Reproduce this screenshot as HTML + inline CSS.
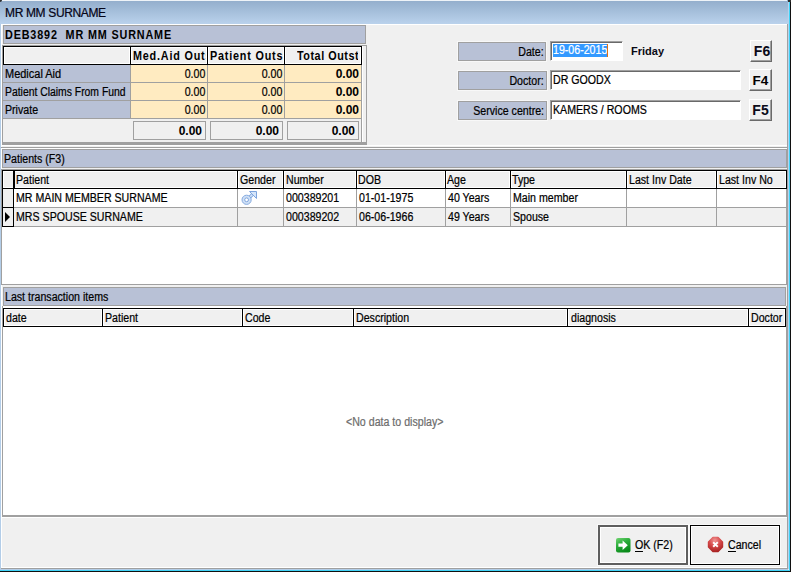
<!DOCTYPE html>
<html><head><meta charset="utf-8">
<style>
*{box-sizing:border-box;margin:0;padding:0}
html,body{width:791px;height:572px;overflow:hidden;background:#F0F0F0}
body{position:relative;font-family:"Liberation Sans",sans-serif;font-size:12px;color:#000}
.a{position:absolute}
.t{position:absolute;white-space:pre;line-height:14px;font-size:12px;letter-spacing:0;transform:scaleX(0.885);transform-origin:0 0;-webkit-text-stroke:0.22px currentColor}
.tr{transform-origin:100% 0}
.b{font-weight:bold;letter-spacing:0;transform:none;-webkit-text-stroke:0}
.bx{transform:scaleX(0.9);letter-spacing:0.9px}
u{text-decoration:none;border-bottom:1px solid #000;display:inline-block;line-height:11px}
</style></head><body>
<div class="a" style="left:0px;top:0px;width:791px;height:24px;background:linear-gradient(#92ADCB,#BAD2EC)"></div>
<div class="a" style="left:2px;top:0px;width:785px;height:1px;background:#EEF3F8"></div>
<div class="a" style="left:0px;top:0px;width:2px;height:2px;background:#303030;border-radius:0 0 2px 0"></div>
<div class="a" style="left:788px;top:0px;width:3px;height:2px;background:#303030"></div>
<div class="t" style="left:5px;top:6px;letter-spacing:-0.35px;color:#050518;transform:none">MR MM SURNAME</div>
<div class="a" style="left:0px;top:24px;width:1px;height:545px;background:#B3CDE8"></div>
<div class="a" style="left:788px;top:2px;width:1px;height:567px;background:#B5D3EE"></div>
<div class="a" style="left:789px;top:2px;width:1px;height:569px;background:#3FD2F6"></div>
<div class="a" style="left:790px;top:2px;width:1px;height:570px;background:#101010"></div>
<div class="a" style="left:0px;top:569px;width:788px;height:1px;background:#B3CDE8"></div>
<div class="a" style="left:0px;top:570px;width:789px;height:1px;background:#3FD2F6"></div>
<div class="a" style="left:0px;top:571px;width:791px;height:1px;background:#101010"></div>
<div class="a" style="left:1px;top:24px;width:787px;height:1px;background:#FFFFFF"></div>
<div class="a" style="left:1px;top:24px;width:1px;height:544px;background:#FFFFFF"></div>
<div class="a" style="left:787px;top:24px;width:1px;height:545px;background:#A0A0A0"></div>
<div class="a" style="left:1px;top:568px;width:787px;height:1px;background:#A0A0A0"></div>
<div class="a" style="left:2px;top:567px;width:785px;height:1px;background:#FFFFFF"></div>
<div class="a" style="left:3px;top:25px;width:363px;height:19px;background:#B8C1D6;border:1px solid #A0A0A0"></div>
<div class="t b bx" style="left:5px;top:28px;letter-spacing:0.95px">DEB3892  MR MM SURNAME</div>
<div class="a" style="left:2px;top:45px;width:365px;height:100px;background:#F0F0F0;border:1px solid #A0A0A0;border-bottom:3px solid #A0A0A0"></div>
<div class="a" style="left:362px;top:46px;width:1px;height:96px;background:#FFFFFF"></div>
<div class="a" style="left:3px;top:46px;width:359px;height:19px;background:#F0F0F0;border:1px solid #000;box-shadow:inset 1px 1px 0 #fff,inset -1px -1px 0 #fff"></div>
<div class="a" style="left:129px;top:47px;width:1px;height:17px;background:#FFFFFF"></div>
<div class="a" style="left:131px;top:47px;width:1px;height:17px;background:#FFFFFF"></div>
<div class="a" style="left:130px;top:46px;width:1px;height:19px;background:#000"></div>
<div class="a" style="left:206px;top:47px;width:1px;height:17px;background:#FFFFFF"></div>
<div class="a" style="left:208px;top:47px;width:1px;height:17px;background:#FFFFFF"></div>
<div class="a" style="left:207px;top:46px;width:1px;height:19px;background:#000"></div>
<div class="a" style="left:283px;top:47px;width:1px;height:17px;background:#FFFFFF"></div>
<div class="a" style="left:285px;top:47px;width:1px;height:17px;background:#FFFFFF"></div>
<div class="a" style="left:284px;top:46px;width:1px;height:19px;background:#000"></div>
<div class="a" style="left:131px;top:47px;width:75px;height:16px;overflow:hidden"><div class="t b bx" style="left:2px;top:2px">Med.Aid Outstanding</div></div>
<div class="a" style="left:208px;top:47px;width:75px;height:16px;overflow:hidden"><div class="t b bx" style="left:2px;top:2px">Patient Outstanding</div></div>
<div class="a" style="left:285px;top:47px;width:73px;height:17px;overflow:hidden"><div class="t b bx" style="left:12px;top:2px;letter-spacing:0.6px">Total Outstanding</div></div>
<div class="a" style="left:3px;top:65px;width:127px;height:53px;background:#B8C1D6"></div>
<div class="a" style="left:131px;top:65px;width:231px;height:53px;background:#FFEBC1"></div>
<div class="a" style="left:3px;top:82px;width:359px;height:1px;background:#A0A0A0"></div>
<div class="a" style="left:3px;top:100px;width:359px;height:1px;background:#A0A0A0"></div>
<div class="a" style="left:3px;top:118px;width:359px;height:1px;background:#A0A0A0"></div>
<div class="a" style="left:130px;top:65px;width:1px;height:54px;background:#A0A0A0"></div>
<div class="a" style="left:207px;top:65px;width:1px;height:54px;background:#A0A0A0"></div>
<div class="a" style="left:284px;top:65px;width:1px;height:54px;background:#A0A0A0"></div>
<div class="a" style="left:361px;top:65px;width:1px;height:77px;background:#A0A0A0"></div>
<div class="t" style="left:5px;top:67px;transform:scaleX(0.915)">Medical Aid</div>
<div class="t tr" style="right:586px;top:67px;text-align:right;">0.00</div>
<div class="t tr" style="right:509px;top:67px;text-align:right;">0.00</div>
<div class="t b" style="right:432px;top:67px;text-align:right">0.00</div>
<div class="t" style="left:5px;top:85px;transform:scaleX(0.865)">Patient Claims From Fund</div>
<div class="t tr" style="right:586px;top:85px;text-align:right;">0.00</div>
<div class="t tr" style="right:509px;top:85px;text-align:right;">0.00</div>
<div class="t b" style="right:432px;top:85px;text-align:right">0.00</div>
<div class="t" style="left:5px;top:103px;">Private</div>
<div class="t tr" style="right:586px;top:103px;text-align:right;">0.00</div>
<div class="t tr" style="right:509px;top:103px;text-align:right;">0.00</div>
<div class="t b" style="right:432px;top:103px;text-align:right">0.00</div>
<div class="a" style="left:133px;top:121px;width:73px;height:19px;border:1px solid #A0A0A0"></div>
<div class="t b" style="right:589px;top:124px;text-align:right">0.00</div>
<div class="a" style="left:210px;top:121px;width:73px;height:19px;border:1px solid #A0A0A0"></div>
<div class="t b" style="right:512px;top:124px;text-align:right">0.00</div>
<div class="a" style="left:287px;top:121px;width:72px;height:19px;border:1px solid #A0A0A0"></div>
<div class="t b" style="right:436px;top:124px;text-align:right">0.00</div>
<div class="a" style="left:2px;top:145px;width:785px;height:1px;background:#FFFFFF"></div>
<div class="a" style="left:1px;top:147px;width:786px;height:1px;background:#A0A0A0"></div>
<div class="a" style="left:1px;top:148px;width:786px;height:1px;background:#FFFFFF"></div>
<div class="a" style="left:458px;top:42px;width:88px;height:19px;background:#B8C1D6;border:1px solid #A0A0A0;box-shadow:0 0 0 1px #F8F8F8"></div>
<div class="t tr" style="right:247px;top:45px;text-align:right;">Date:</div>
<div class="a" style="left:550px;top:41px;width:73px;height:20px;background:#fff;border-top:1px solid #A0A0A0;border-left:1px solid #A0A0A0;border-right:1px solid #FFFFFF;border-bottom:1px solid #FFFFFF;box-shadow:inset 1px 1px 0 #696969"></div>
<div class="a" style="left:553px;top:44px;width:55px;height:13px;background:#3399FF"></div>
<div class="t" style="left:553px;top:43px;color:#fff">19-06-2015</div>
<div class="a" style="left:607px;top:44px;width:1px;height:13px;background:#E07010"></div>
<div class="t b" style="left:631px;top:44px;font-size:11px;color:#0A0A14">Friday</div>
<div class="a" style="left:750px;top:40px;width:22px;height:22px;background:#F0F0F0;border-top:1px solid #fff;border-left:1px solid #fff;border-right:1px solid #6A6A6A;border-bottom:1px solid #6A6A6A;box-shadow:inset -1px -1px 0 #A0A0A0"></div>
<div class="t b" style="left:751px;top:44px;width:22px;text-align:center;font-size:14px;line-height:15px;color:#0A0A18">F6</div>
<div class="a" style="left:458px;top:71px;width:89px;height:19px;background:#B8C1D6;border:1px solid #A0A0A0;box-shadow:0 0 0 1px #F8F8F8"></div>
<div class="t tr" style="right:247px;top:74px;text-align:right;">Doctor:</div>
<div class="a" style="left:550px;top:70px;width:191px;height:20px;background:#fff;border-top:1px solid #A0A0A0;border-left:1px solid #A0A0A0;border-right:1px solid #FFFFFF;border-bottom:1px solid #FFFFFF;box-shadow:inset 1px 1px 0 #696969"></div>
<div class="t" style="left:553px;top:73px;">DR GOODX</div>
<div class="a" style="left:749px;top:69px;width:23px;height:22px;background:#F0F0F0;border-top:1px solid #fff;border-left:1px solid #fff;border-right:1px solid #6A6A6A;border-bottom:1px solid #6A6A6A;box-shadow:inset -1px -1px 0 #A0A0A0"></div>
<div class="t b" style="left:749px;top:74px;width:23px;text-align:center;font-size:13.5px">F4</div>
<div class="a" style="left:458px;top:101px;width:89px;height:19px;background:#B8C1D6;border:1px solid #A0A0A0;box-shadow:0 0 0 1px #F8F8F8"></div>
<div class="t tr" style="right:247px;top:104px;text-align:right;">Service centre:</div>
<div class="a" style="left:550px;top:100px;width:191px;height:20px;background:#fff;border-top:1px solid #A0A0A0;border-left:1px solid #A0A0A0;border-right:1px solid #FFFFFF;border-bottom:1px solid #FFFFFF;box-shadow:inset 1px 1px 0 #696969"></div>
<div class="t" style="left:553px;top:103px;">KAMERS / ROOMS</div>
<div class="a" style="left:749px;top:99px;width:23px;height:22px;background:#F0F0F0;border-top:1px solid #fff;border-left:1px solid #fff;border-right:1px solid #6A6A6A;border-bottom:1px solid #6A6A6A;box-shadow:inset -1px -1px 0 #A0A0A0"></div>
<div class="t b" style="left:749px;top:103px;width:23px;text-align:center;font-size:14px;line-height:15px;color:#0A0A18">F5</div>
<div class="a" style="left:2px;top:149px;width:785px;height:19px;background:#B8C1D6;border:1px solid #A0A0A0"></div>
<div class="t" style="left:4px;top:152px;">Patients (F3)</div>
<div class="a" style="left:1px;top:169px;width:787px;height:116px;background:#fff;border:1px solid #A0A0A0;border-right:2px solid #A0A0A0"></div>
<div class="a" style="left:3px;top:189px;width:783px;height:18px;background:#fff"></div>
<div class="a" style="left:3px;top:208px;width:783px;height:18px;background:#F0F0F0"></div>
<div class="a" style="left:3px;top:189px;width:10px;height:37px;background:#F0F0F0"></div>
<div class="a" style="left:2px;top:170px;width:785px;height:19px;background:#F0F0F0;border:1px solid #000;box-shadow:inset 1px 1px 0 #fff,inset -1px -1px 0 #fff"></div>
<div class="a" style="left:2px;top:188px;width:785px;height:1px;background:#000"></div>
<div class="a" style="left:14px;top:207px;width:772px;height:1px;background:#A0A0A0"></div>
<div class="a" style="left:14px;top:226px;width:772px;height:1px;background:#A0A0A0"></div>
<div class="a" style="left:2px;top:207px;width:12px;height:1px;background:#000"></div>
<div class="a" style="left:2px;top:226px;width:12px;height:1px;background:#000"></div>
<div class="a" style="left:2px;top:170px;width:1px;height:57px;background:#000"></div>
<div class="a" style="left:13px;top:170px;width:1px;height:57px;background:#000"></div>
<div class="a" style="left:14px;top:171px;width:1px;height:17px;background:#000"></div>
<div class="a" style="left:786px;top:189px;width:1px;height:38px;background:#A0A0A0"></div>
<div class="a" style="left:236px;top:171px;width:1px;height:17px;background:#fff"></div>
<div class="a" style="left:238px;top:171px;width:1px;height:17px;background:#fff"></div>
<div class="a" style="left:237px;top:170px;width:1px;height:19px;background:#000"></div>
<div class="a" style="left:237px;top:189px;width:1px;height:38px;background:#A0A0A0"></div>
<div class="a" style="left:282px;top:171px;width:1px;height:17px;background:#fff"></div>
<div class="a" style="left:284px;top:171px;width:1px;height:17px;background:#fff"></div>
<div class="a" style="left:283px;top:170px;width:1px;height:19px;background:#000"></div>
<div class="a" style="left:283px;top:189px;width:1px;height:38px;background:#A0A0A0"></div>
<div class="a" style="left:355px;top:171px;width:1px;height:17px;background:#fff"></div>
<div class="a" style="left:357px;top:171px;width:1px;height:17px;background:#fff"></div>
<div class="a" style="left:356px;top:170px;width:1px;height:19px;background:#000"></div>
<div class="a" style="left:356px;top:189px;width:1px;height:38px;background:#A0A0A0"></div>
<div class="a" style="left:444px;top:171px;width:1px;height:17px;background:#fff"></div>
<div class="a" style="left:446px;top:171px;width:1px;height:17px;background:#fff"></div>
<div class="a" style="left:445px;top:170px;width:1px;height:19px;background:#000"></div>
<div class="a" style="left:445px;top:189px;width:1px;height:38px;background:#A0A0A0"></div>
<div class="a" style="left:509px;top:171px;width:1px;height:17px;background:#fff"></div>
<div class="a" style="left:511px;top:171px;width:1px;height:17px;background:#fff"></div>
<div class="a" style="left:510px;top:170px;width:1px;height:19px;background:#000"></div>
<div class="a" style="left:510px;top:189px;width:1px;height:38px;background:#A0A0A0"></div>
<div class="a" style="left:625px;top:171px;width:1px;height:17px;background:#fff"></div>
<div class="a" style="left:627px;top:171px;width:1px;height:17px;background:#fff"></div>
<div class="a" style="left:626px;top:170px;width:1px;height:19px;background:#000"></div>
<div class="a" style="left:626px;top:189px;width:1px;height:38px;background:#A0A0A0"></div>
<div class="a" style="left:715px;top:171px;width:1px;height:17px;background:#fff"></div>
<div class="a" style="left:717px;top:171px;width:1px;height:17px;background:#fff"></div>
<div class="a" style="left:716px;top:170px;width:1px;height:19px;background:#000"></div>
<div class="a" style="left:716px;top:189px;width:1px;height:38px;background:#A0A0A0"></div>
<div class="t" style="left:16px;top:173px;">Patient</div>
<div class="t" style="left:240px;top:173px;">Gender</div>
<div class="t" style="left:286px;top:173px;">Number</div>
<div class="t" style="left:358px;top:173px;">DOB</div>
<div class="t" style="left:447px;top:173px;">Age</div>
<div class="t" style="left:512px;top:173px;">Type</div>
<div class="t" style="left:629px;top:173px;">Last Inv Date</div>
<div class="t" style="left:719px;top:173px;">Last Inv No</div>
<div class="t" style="left:16px;top:191px;">MR MAIN MEMBER SURNAME</div>
<div class="t" style="left:16px;top:210px;">MRS SPOUSE SURNAME</div>
<div class="t" style="left:286px;top:191px;">000389201</div>
<div class="t" style="left:286px;top:210px;">000389202</div>
<div class="t" style="left:359px;top:191px;">01-01-1975</div>
<div class="t" style="left:359px;top:210px;">06-06-1966</div>
<div class="t" style="left:448px;top:191px;">40 Years</div>
<div class="t" style="left:448px;top:210px;">49 Years</div>
<div class="t" style="left:513px;top:191px;">Main member</div>
<div class="t" style="left:513px;top:210px;">Spouse</div>
<div class="a" style="left:5px;top:212px;width:0;height:0;border-top:5px solid transparent;border-bottom:5px solid transparent;border-left:5px solid #000"></div>
<svg class="a" style="left:239px;top:189px" width="20" height="18" viewBox="0 0 20 18"><path d="M9.2 9.8 L14.6 4.4" stroke="#7EA5DE" stroke-width="3.4"/><path d="M9.2 9.8 L14.6 4.4" stroke="#D3E3F8" stroke-width="1.6"/><path d="M10.5 2.5 H17.5 V9.5 Z" fill="#D6E6FA" stroke="#7EA5DE" stroke-width="1" stroke-linejoin="miter"/><circle cx="7.6" cy="10.8" r="4.6" fill="#CFE0F6" stroke="#86ABE0" stroke-width="1"/><circle cx="7.6" cy="10.8" r="1.9" fill="#fff" stroke="#7EA5DE" stroke-width="1"/></svg>
<div class="a" style="left:3px;top:287px;width:783px;height:19px;background:#B8C1D6;border:1px solid #A0A0A0"></div>
<div class="t" style="left:5px;top:290px;">Last transaction items</div>
<div class="a" style="left:2px;top:306px;width:786px;height:211px;background:#fff;border-left:1px solid #A0A0A0;border-right:2px solid #A0A0A0;border-bottom:2px solid #A0A0A0"></div>
<div class="a" style="left:3px;top:308px;width:783px;height:19px;background:#F0F0F0;border:1px solid #000;box-shadow:inset 1px 1px 0 #fff,inset -1px -1px 0 #fff"></div>
<div class="a" style="left:101px;top:309px;width:1px;height:17px;background:#fff"></div>
<div class="a" style="left:103px;top:309px;width:1px;height:17px;background:#fff"></div>
<div class="a" style="left:102px;top:308px;width:1px;height:19px;background:#000"></div>
<div class="a" style="left:241px;top:309px;width:1px;height:17px;background:#fff"></div>
<div class="a" style="left:243px;top:309px;width:1px;height:17px;background:#fff"></div>
<div class="a" style="left:242px;top:308px;width:1px;height:19px;background:#000"></div>
<div class="a" style="left:352px;top:309px;width:1px;height:17px;background:#fff"></div>
<div class="a" style="left:354px;top:309px;width:1px;height:17px;background:#fff"></div>
<div class="a" style="left:353px;top:308px;width:1px;height:19px;background:#000"></div>
<div class="a" style="left:566px;top:309px;width:1px;height:17px;background:#fff"></div>
<div class="a" style="left:568px;top:309px;width:1px;height:17px;background:#fff"></div>
<div class="a" style="left:567px;top:308px;width:1px;height:19px;background:#000"></div>
<div class="a" style="left:747px;top:309px;width:1px;height:17px;background:#fff"></div>
<div class="a" style="left:749px;top:309px;width:1px;height:17px;background:#fff"></div>
<div class="a" style="left:748px;top:308px;width:1px;height:19px;background:#000"></div>
<div class="t" style="left:6px;top:311px;">date</div>
<div class="t" style="left:105px;top:311px;">Patient</div>
<div class="t" style="left:245px;top:311px;">Code</div>
<div class="t" style="left:356px;top:311px;">Description</div>
<div class="t" style="left:571px;top:311px;">diagnosis</div>
<div class="t" style="left:751px;top:311px;">Doctor</div>
<div class="t" style="left:346px;top:415px;color:#6D6D6D">&lt;No data to display&gt;</div>
<div class="a" style="left:2px;top:517px;width:785px;height:1px;background:#FFFFFF"></div>
<div class="a" style="left:598px;top:525px;width:90px;height:40px;border:2px solid #5E5E5E;background:#F0F0F0;box-shadow:inset 1px 1px 0 #fff,inset -1px -1px 0 #fff,0 0 0 1px #F8F8F8"></div>
<div class="a" style="left:690px;top:525px;width:90px;height:40px;border:1px solid #000;background:#F0F0F0;box-shadow:inset 1px 1px 0 #fff,inset -1px -1px 0 #fff,0 0 0 1px #F8F8F8"></div>
<svg class="a" style="left:616px;top:538px" width="15" height="15" viewBox="0 0 15 15"><defs><linearGradient id="g1" x1="0" y1="0" x2="0.5" y2="1"><stop offset="0" stop-color="#74D474"/><stop offset="0.45" stop-color="#2DAE3C"/><stop offset="1" stop-color="#0A8A1A"/></linearGradient></defs><rect x="0" y="0" width="14.5" height="14.5" rx="2" fill="url(#g1)"/><path d="M2.4 5.6 H6.6 V2.4 L11.8 7.2 L6.6 12 V8.8 H2.4 Z" fill="#fff"/></svg>
<div class="t" style="left:635px;top:538px;"><u>O</u>K (F2)</div>
<svg class="a" style="left:707px;top:536px" width="18" height="18" viewBox="0 0 18 18"><defs><radialGradient id="r1" cx="0.45" cy="0.2" r="0.85"><stop offset="0" stop-color="#F09494"/><stop offset="0.5" stop-color="#D54848"/><stop offset="1" stop-color="#A82222"/></radialGradient></defs><path d="M6 1.6 H11 L15.4 6 V11 L11 15.4 H6 L1.6 11 V6 Z" fill="url(#r1)" stroke="url(#r1)" stroke-width="1.6" stroke-linejoin="round"/><path d="M6.9 6.9 L10.1 10.1 M10.1 6.9 L6.9 10.1" stroke="#fff" stroke-width="2" stroke-linecap="square"/></svg>
<div class="t" style="left:728px;top:538px;"><u>C</u>ancel</div>
</body></html>
